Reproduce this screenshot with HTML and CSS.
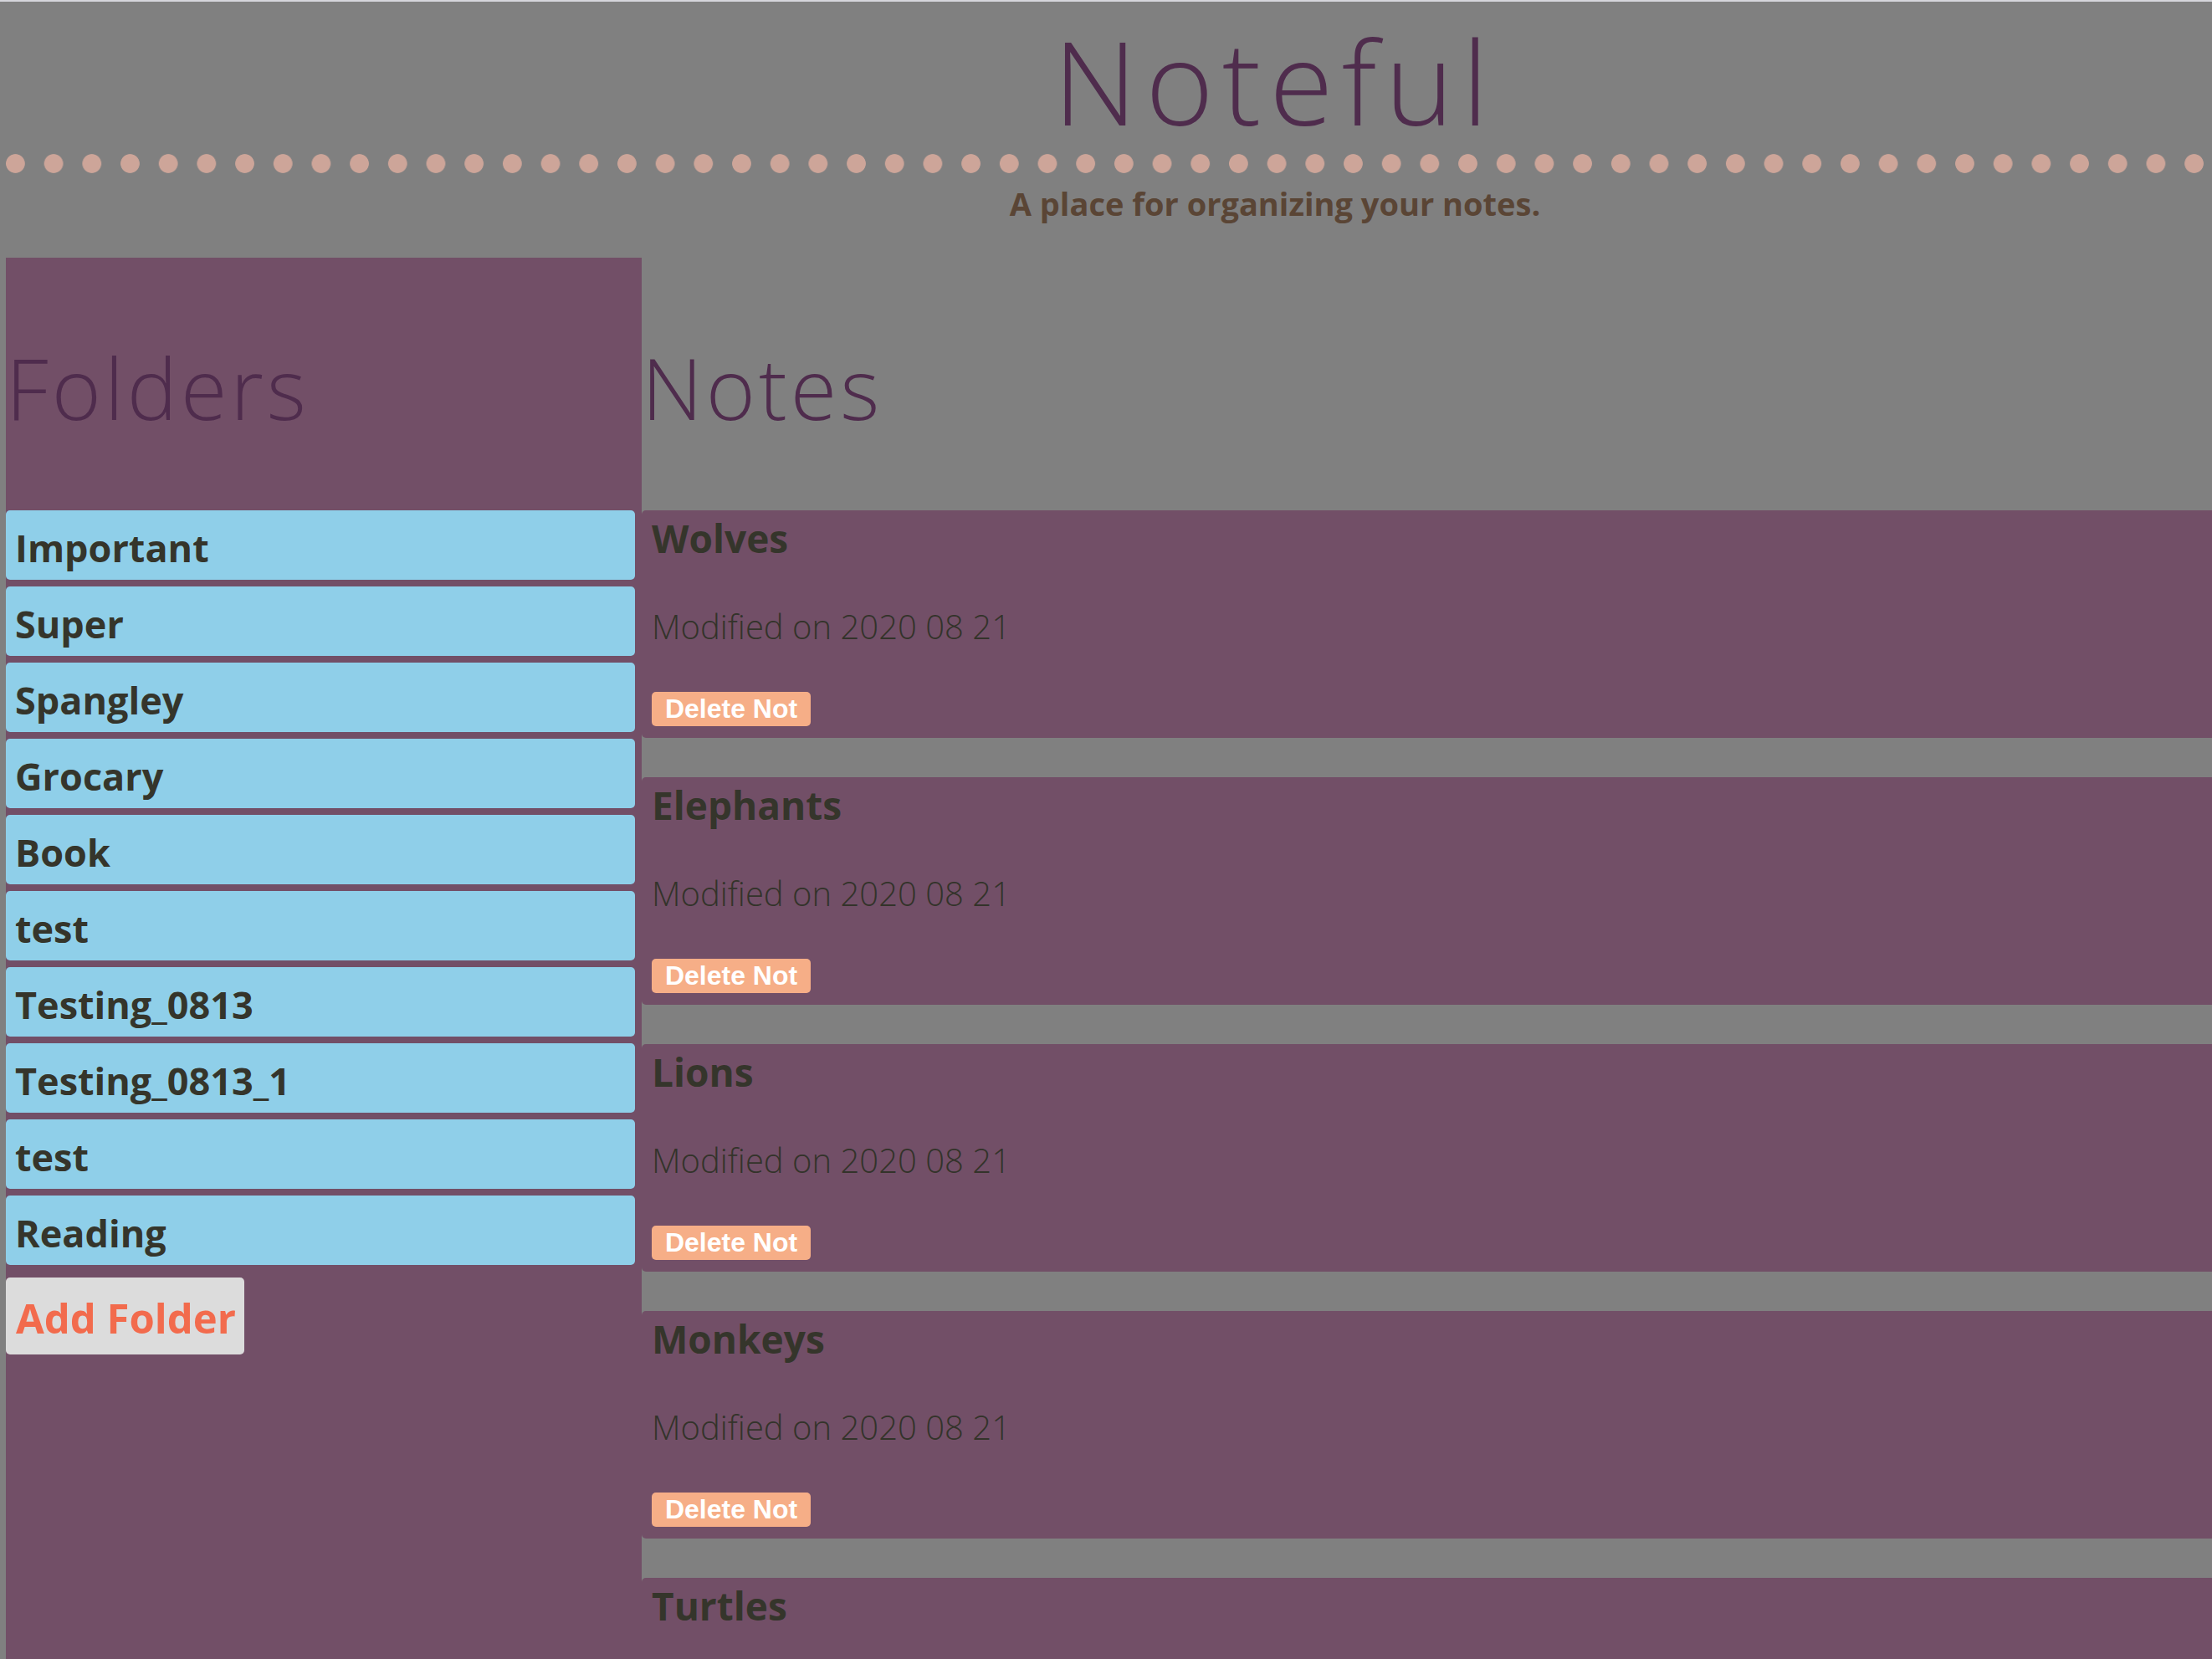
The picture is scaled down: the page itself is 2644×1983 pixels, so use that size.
FILE: index.html
```html
<!DOCTYPE html>
<html lang="en">
<head>
<meta charset="utf-8">
<title>Noteful</title>
<link rel="stylesheet" href="styles.css">
</head>
<body>
<div class="app">
  <header class="banner">
    <h1 class="banner__title">Noteful</h1>
    <div class="banner__dots"></div>
    <p class="banner__tagline">A place for organizing your notes.</p>
  </header>
  <div class="layout">
    <nav class="sidebar">
      <h2 class="section-title">Folders</h2>
      <ul class="folder-list">
        <li><a class="folder">Important</a></li>
        <li><a class="folder">Super</a></li>
        <li><a class="folder">Spangley</a></li>
        <li><a class="folder">Grocary</a></li>
        <li><a class="folder">Book</a></li>
        <li><a class="folder">test</a></li>
        <li><a class="folder">Testing_0813</a></li>
        <li><a class="folder">Testing_0813_1</a></li>
        <li><a class="folder">test</a></li>
        <li><a class="folder">Reading</a></li>
      </ul>
      <button class="add-folder" type="button">Add Folder</button>
    </nav>
    <main class="notes">
      <h2 class="section-title">Notes</h2>
      <ul class="note-list">
        <li class="note">
          <h3 class="note__title">Wolves</h3>
          <p class="note__modified">Modified on 2020 08 21</p>
          <button class="note__delete" type="button">Delete Not</button>
        </li>
        <li class="note">
          <h3 class="note__title">Elephants</h3>
          <p class="note__modified">Modified on 2020 08 21</p>
          <button class="note__delete" type="button">Delete Not</button>
        </li>
        <li class="note">
          <h3 class="note__title">Lions</h3>
          <p class="note__modified">Modified on 2020 08 21</p>
          <button class="note__delete" type="button">Delete Not</button>
        </li>
        <li class="note">
          <h3 class="note__title">Monkeys</h3>
          <p class="note__modified">Modified on 2020 08 21</p>
          <button class="note__delete" type="button">Delete Not</button>
        </li>
        <li class="note">
          <h3 class="note__title">Turtles</h3>
          <p class="note__modified">Modified on 2020 08 21</p>
          <button class="note__delete" type="button">Delete Not</button>
        </li>
      </ul>
    </main>
  </div>
</div>
</body>
</html>
```

FILE: styles.css
```css
html {
  overflow: hidden;
  background: #808080;
}

body {
  margin: 0;
  border-top: 2px solid #d6d6dc;
  background: #808080;
  font-family: "Open Sans", "Noto Sans", sans-serif;
  color: #35352b;
}

.app {
  width: 3034px;
  padding-left: 7px;
}

/* ---------- header ---------- */
.banner {
  text-align: center;
}

.banner__title {
  margin: 6px 0 0;
  font-size: 139px;
  line-height: 176px;
  font-weight: 300;
  letter-spacing: 10px;
  color: #4f2c4d;
}

.banner__dots {
  height: 23px;
  background-image: radial-gradient(circle at 11.4px 11.5px, #cda599 10.9px, rgba(205, 165, 153, 0) 11.7px);
  background-size: 45.7px 23px;
  background-repeat: repeat-x;
}

.banner__tagline {
  margin: 11px 0 0;
  font-size: 38px;
  line-height: 50px;
  font-weight: 700;
  color: #5a4535;
}

/* ---------- layout ---------- */
.layout {
  display: flex;
  margin-top: 40px;
}

.section-title {
  margin: 86px 0 78px;
  font-size: 101px;
  line-height: 138px;
  font-weight: 300;
  letter-spacing: 4px;
  color: #4f2c4d;
}

/* ---------- sidebar ---------- */
.sidebar {
  width: 760px;
  flex: none;
  background: #724f67;
}

.folder-list {
  list-style: none;
  margin: 0 8px 0 0;
  padding: 0;
  display: flex;
  flex-direction: column;
  gap: 8px;
}

.folder {
  display: block;
  padding: 14px 8px 8px 11px;
  border-radius: 5px;
  background: #8fcfe9;
  font-size: 45px;
  line-height: 61px;
  font-weight: 700;
  color: #35352b;
}

.add-folder {
  display: block;
  margin-top: 15px;
  padding: 14px 10px 10px 12px;
  border: none;
  border-radius: 5px;
  background: #dcdcdc;
  font-family: "Open Sans", "Noto Sans", sans-serif;
  font-size: 49px;
  line-height: 68px;
  font-weight: 700;
  color: #f26b4d;
}

/* ---------- notes ---------- */
.notes {
  flex: 1;
}

.note-list {
  list-style: none;
  margin: 0;
  padding: 0;
  display: flex;
  flex-direction: column;
  gap: 47px;
}

.note {
  padding: 2px 0 14px 12px;
  border-radius: 5px;
  background: #724f67;
}

.note__title {
  margin: 0;
  font-size: 46px;
  line-height: 62px;
  font-weight: 700;
  color: #35352b;
}

.note__modified {
  margin: 48px 0 0;
  font-size: 40px;
  line-height: 53px;
  font-weight: 350;
  color: #33332a;
}

.note__delete {
  display: block;
  margin-top: 52px;
  width: 190px;
  height: 41px;
  padding: 0;
  border: none;
  border-radius: 5px;
  background: #f6ae87;
  font-family: "Liberation Sans", Arial, sans-serif;
  font-size: 32px;
  line-height: 41px;
  font-weight: 700;
  color: #ffffff;
  text-align: center;
  white-space: nowrap;
  overflow: hidden;
}
```
